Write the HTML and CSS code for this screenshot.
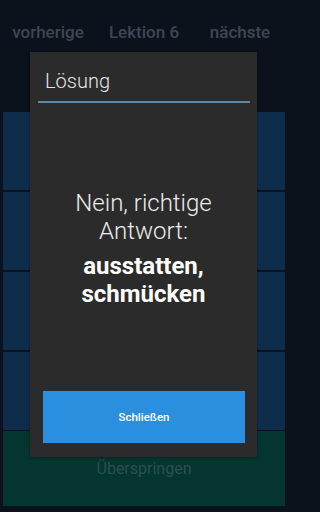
FILE: index.html
```html
<!DOCTYPE html>
<html lang="de">
<head>
<meta charset="utf-8">
<link rel="stylesheet" href="styles.css">
</head>
<body>
<div class="screen">
  <header class="nav">
    <span class="nav-item">vorherige</span>
    <span class="nav-item">Lektion 6</span>
    <span class="nav-item">nächste</span>
  </header>
  <div class="question"></div>
  <div class="tiles">
    <div class="tile"></div>
    <div class="tile"></div>
    <div class="tile"></div>
    <div class="tile"></div>
  </div>
  <div class="skip">Überspringen</div>

  <div class="dialog">
    <div class="dialog-title">Lösung</div>
    <div class="dialog-divider"></div>
    <div class="dialog-message">
      <p class="msg light">Nein, richtige<br>Antwort:</p>
      <p class="msg answer">ausstatten,<br>schmücken</p>
    </div>
    <div class="dialog-button">Schließen</div>
  </div>
</div>
</body>
</html>
```
FILE: styles.css
```css
html, body {
  margin: 0;
  padding: 0;
  background: #0b121c;
}
body {
  font-family: Roboto, "Noto Sans", "Liberation Sans", sans-serif;
  width: 288px;
  height: 512px;
  overflow: hidden;
}
.screen {
  position: relative;
  width: 288px;
  height: 512px;
  display: flex;
  flex-direction: column;
}
.nav {
  display: grid;
  grid-template-columns: 1fr 1fr 1fr;
  height: 64px;
  align-items: center;
  box-sizing: border-box;
  padding-bottom: 1px;
}
.nav-item {
  text-align: center;
  color: #3e4753;
  font-size: 17px;
  font-weight: 500;
}
.question {
  height: 48px;
}
.tiles {
  display: flex;
  flex-direction: column;
  gap: 2px;
  padding: 0 3px;
}
.tile {
  height: 78px;
  background: #0e2d4b;
  border-radius: 1px;
}
.skip {
  margin: 1px 3px 0;
  height: 75px;
  background: #04352f;
  color: #2d504b;
  font-size: 16px;
  display: flex;
  align-items: center;
  justify-content: center;
}
.dialog {
  position: absolute;
  left: 30px;
  top: 52px;
  width: 227px;
  height: 405px;
  background: #2b2b2b;
  display: flex;
  flex-direction: column;
  box-shadow: 0 0 3px rgba(0,0,0,0.4);
}
.dialog-title {
  padding: 17px 0 0 15px;
  height: 31px;
  font-size: 20px;
  font-weight: 300;
  color: #e6e6e6;
  line-height: 24px;
}
.dialog-divider {
  height: 2px;
  margin: 1px 7px 0 8px;
  background: #5b89a3;
}
.dialog-message {
  flex: 1;
  display: flex;
  flex-direction: column;
  justify-content: center;
  align-items: center;
  gap: 7px;
  text-align: center;
  font-size: 24px;
  line-height: 28px;
  color: #ececec;
  padding-top: 2px;
}
.msg {
  margin: 0;
}
.light {
  font-weight: 300;
}
.answer {
  font-weight: 700;
  color: #ffffff;
}
.dialog-button {
  margin: 0 12px 14px 13px;
  height: 52px;
  background: #2b8fe0;
  color: #ffffff;
  font-size: 11.5px;
  font-weight: 500;
  display: flex;
  align-items: center;
  justify-content: center;
}
```
